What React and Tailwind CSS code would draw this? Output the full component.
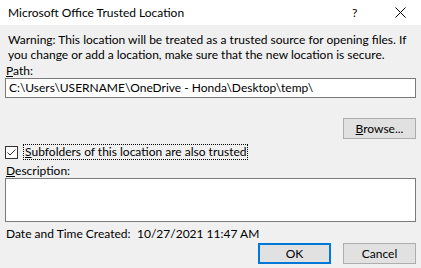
export default function App() {
  return (
    <div className="w-[421px] h-[268px] bg-[#f0f0f0] text-[12px] text-black overflow-hidden" style={{ fontFamily: 'Lato, "Liberation Sans", sans-serif' }}>
      <div className="h-[25px] bg-white flex items-center pl-2 relative">
        <span className="leading-none">Microsoft Office Trusted Location</span>
        <span className="absolute left-[352px] top-[5px] leading-[15px]">?</span>
        <svg className="absolute left-[395px] top-[7px]" width="11" height="11" viewBox="0 0 11 11">
          <path d="M0.5 0.5 L10.5 10.5 M10.5 0.5 L0.5 10.5" stroke="#000" strokeWidth="1" />
        </svg>
      </div>

      <div className="px-[5px]">
        <p className="pl-[3px] pt-[7px] leading-[15px] whitespace-nowrap">
          Warning: This location will be treated as a trusted source for opening files. If<br />
          you change or add a location, make sure that the new location is secure.
        </p>
        <div className="pl-[1px] mt-[1px] leading-[15px]"><span className="underline">P</span>ath:</div>
        <div className="h-[20px] border border-[#7a7a7a] bg-white flex items-center pl-[3px] leading-none">
          C:\Users\USERNAME\OneDrive - Honda\Desktop\temp\
        </div>

        <div className="flex justify-end mt-[20px]">
          <button className="w-[73px] h-[21px] bg-[#e1e1e1] border border-[#adadad] leading-none"><span className="underline">B</span>rowse...</button>
        </div>

        <div className="flex items-center mt-[5px] h-[16px]">
          <div className="w-[13px] h-[13px] border border-[#333] bg-white flex items-center justify-center">
            <svg width="11" height="11" viewBox="0 0 11 11">
              <path d="M1.5 5.5 L4 8 L9.5 2.5" stroke="#333" strokeWidth="1" fill="none" />
            </svg>
          </div>
          <div className="ml-[5px] h-[16px] border border-dotted border-black flex items-center px-[1px] leading-none whitespace-nowrap">
            <span className="underline">S</span>ubfolders of this location are also trusted
          </div>
        </div>

        <div className="pl-[1px] mt-[3px] leading-[15px]"><span className="underline">D</span>escription:</div>
        <div className="h-[44px] border border-[#7a7a7a] bg-white"></div>

        <div className="flex mt-[4px] pl-[1px] leading-[15px] whitespace-nowrap">
          <span className="w-[131px]">Date and Time Created:</span>
          <span>10/27/2021 11:47 AM</span>
        </div>

        <div className="flex justify-end gap-3 mt-[2px]">
          <button className="w-[73px] h-[21px] bg-[#e1e1e1] border-2 border-[#0078d7] leading-none">OK</button>
          <button className="w-[73px] h-[21px] bg-[#e1e1e1] border border-[#adadad] leading-none">Cancel</button>
        </div>
      </div>
    </div>
  )
}
